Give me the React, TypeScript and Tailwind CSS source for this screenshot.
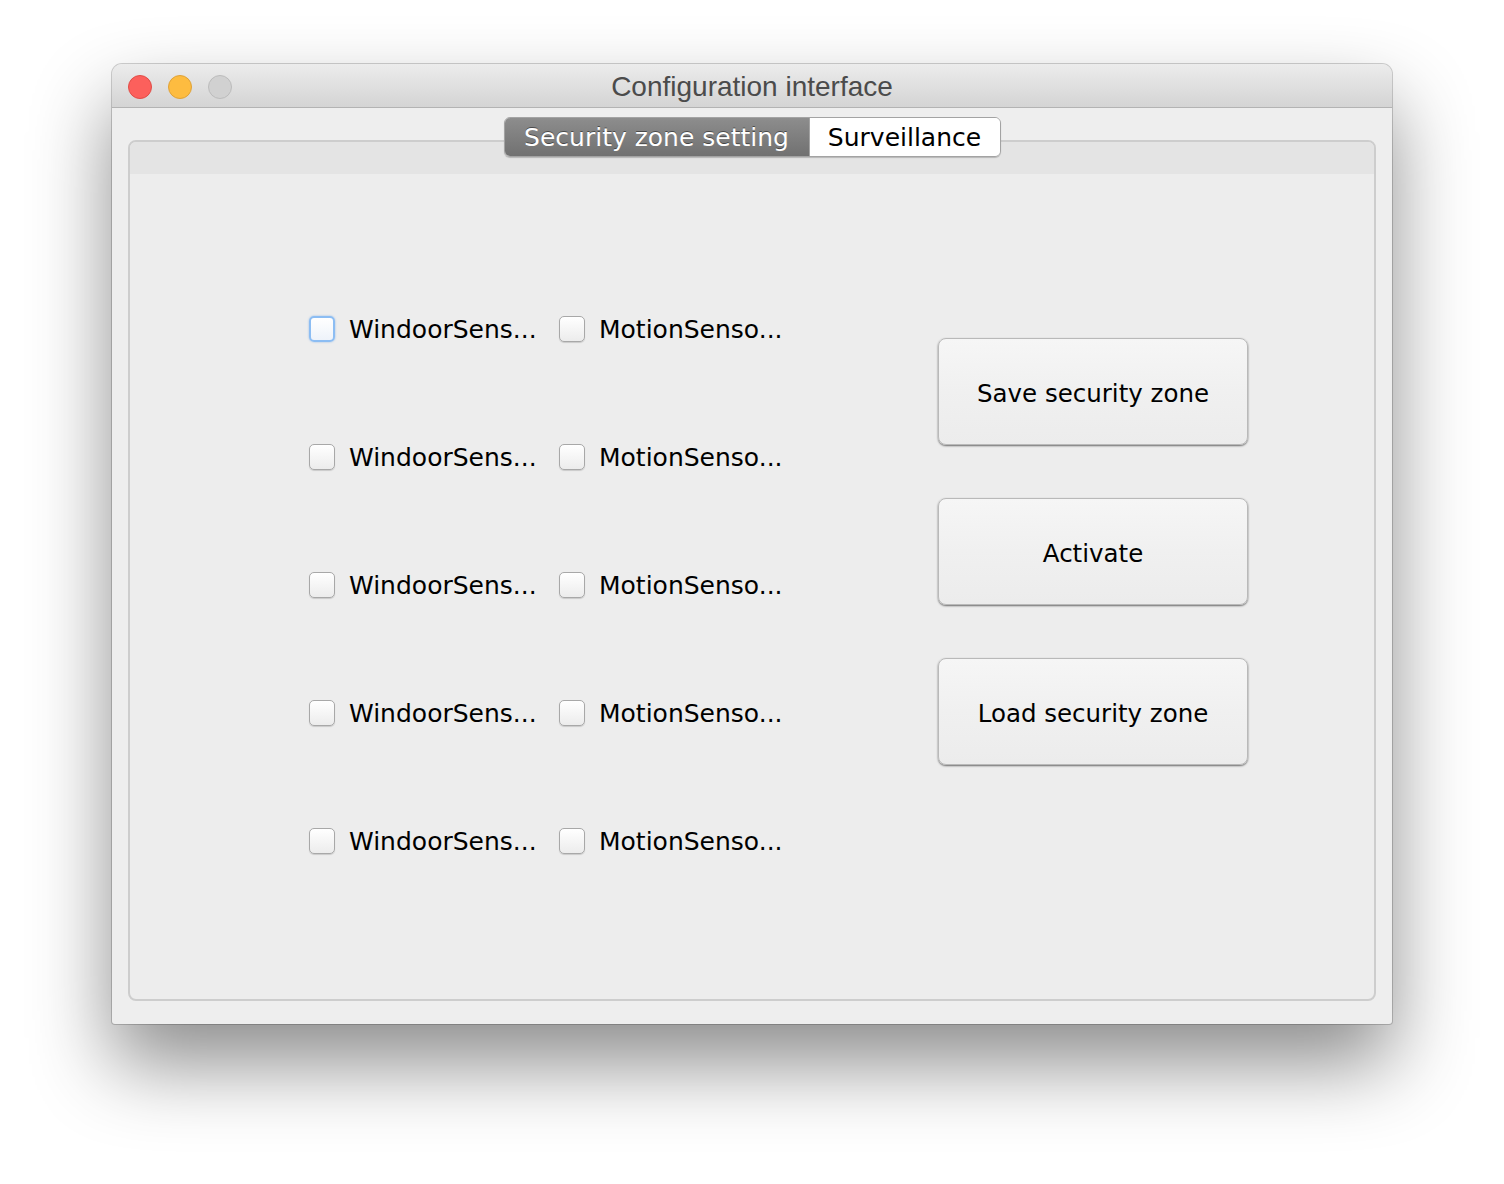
import React from "react"

const ui = { fontFamily: '"DejaVu Sans", "Noto Sans", sans-serif' }
const title = { fontFamily: '"Liberation Sans", Arial, sans-serif' }

function CheckItem({ label, focused }: { label: string; focused?: boolean }) {
  return (
    <label className="flex items-center gap-[14px] w-[250px] text-[25px] text-black leading-none">
      <span
        className={
          focused
            ? "block w-[26px] h-[26px] rounded-[5px] border-2 border-[#8cbdf3] bg-gradient-to-b from-white to-[#eef3fa] shadow-[0_0_2px_rgba(80,150,230,0.6)]"
            : "block w-[26px] h-[26px] rounded-[5px] border border-[#a8a8a8] bg-gradient-to-b from-white to-[#ececec] shadow-[0_1px_1px_rgba(0,0,0,0.15)]"
        }
      />
      <span className="whitespace-nowrap">{label}</span>
    </label>
  )
}

function Btn({ children }: { children: React.ReactNode }) {
  return (
    <button className="w-[310px] h-[107px] pt-[5px] rounded-[8px] border border-[#b9b9b9] bg-gradient-to-b from-[#f6f6f6] via-[#f0f0f0] to-[#ececec] shadow-[0_1px_2px_rgba(0,0,0,0.55)] text-[24.5px] text-black">
      {children}
    </button>
  )
}

export default function App() {
  const rows = [0, 1, 2, 3, 4]
  return (
    <div className="min-h-[1184px] bg-white pt-[64px] pl-[112px]" style={ui}>
      <div className="w-[1280px] h-[960px] rounded-t-[10px] rounded-b-[3px] bg-[#eeeeee] flex flex-col shadow-[0_40px_80px_rgba(0,0,0,0.45),0_0_0_1px_rgba(0,0,0,0.18)]">
        {/* title bar */}
        <div className="relative h-[44px] rounded-t-[10px] border-b border-[#b3b3b3] bg-gradient-to-b from-[#ececec] to-[#d4d4d4] flex items-center">
          <div className="flex items-center gap-[16px] pl-[16px] pt-[2px]">
            <span className="block w-[24px] h-[24px] rounded-full bg-[#fc605c] border border-[#e04d47]" />
            <span className="block w-[24px] h-[24px] rounded-full bg-[#fdbc40] border border-[#dfa238]" />
            <span className="block w-[24px] h-[24px] rounded-full bg-[#d1d1d1] border border-[#bcbcbc]" />
          </div>
          <div className="absolute inset-0 pt-[3px] flex items-center justify-center text-[28px] text-[#4b4b4b]" style={title}>
            Configuration interface
          </div>
        </div>

        {/* tabs + pane */}
        <div className="flex-1 flex flex-col px-[16px] pt-[9px] pb-[23px]">
          <div className="relative z-10 flex justify-center -mb-[17px]">
            <div className="flex h-[40px] rounded-[6px] border border-[#a3a3a3] overflow-hidden shadow-[0_1px_1px_rgba(0,0,0,0.2)] text-[25px] leading-none">
              <div className="w-[304px] flex items-center justify-center bg-gradient-to-b from-[#8d8d8d] to-[#717171] text-white [text-shadow:0_-1px_0_rgba(0,0,0,0.45)]">
                Security zone setting
              </div>
              <div className="w-[191px] flex items-center justify-center bg-white text-black border-l border-[#a3a3a3]">
                Surveillance
              </div>
            </div>
          </div>

          <div className="flex-1 rounded-[8px] border-2 border-[#cdcdcd] bg-[#ededed] flex flex-col overflow-hidden">
            <div className="h-[32px] bg-[#e4e4e4]" />
            <div className="flex-1 flex items-start pl-[179px] pr-[126px]">
              <div className="mt-[91px] flex flex-col">
                {rows.map((r) => (
                  <div key={r} className="h-[128px] flex items-center">
                    <CheckItem label="WindoorSens..." focused={r === 0} />
                    <CheckItem label="MotionSenso..." />
                  </div>
                ))}
              </div>
              <div className="ml-auto mt-[164px] flex flex-col gap-[53px]">
                <Btn>Save security zone</Btn>
                <Btn>Activate</Btn>
                <Btn>Load security zone</Btn>
              </div>
            </div>
          </div>
        </div>
      </div>
    </div>
  )
}
